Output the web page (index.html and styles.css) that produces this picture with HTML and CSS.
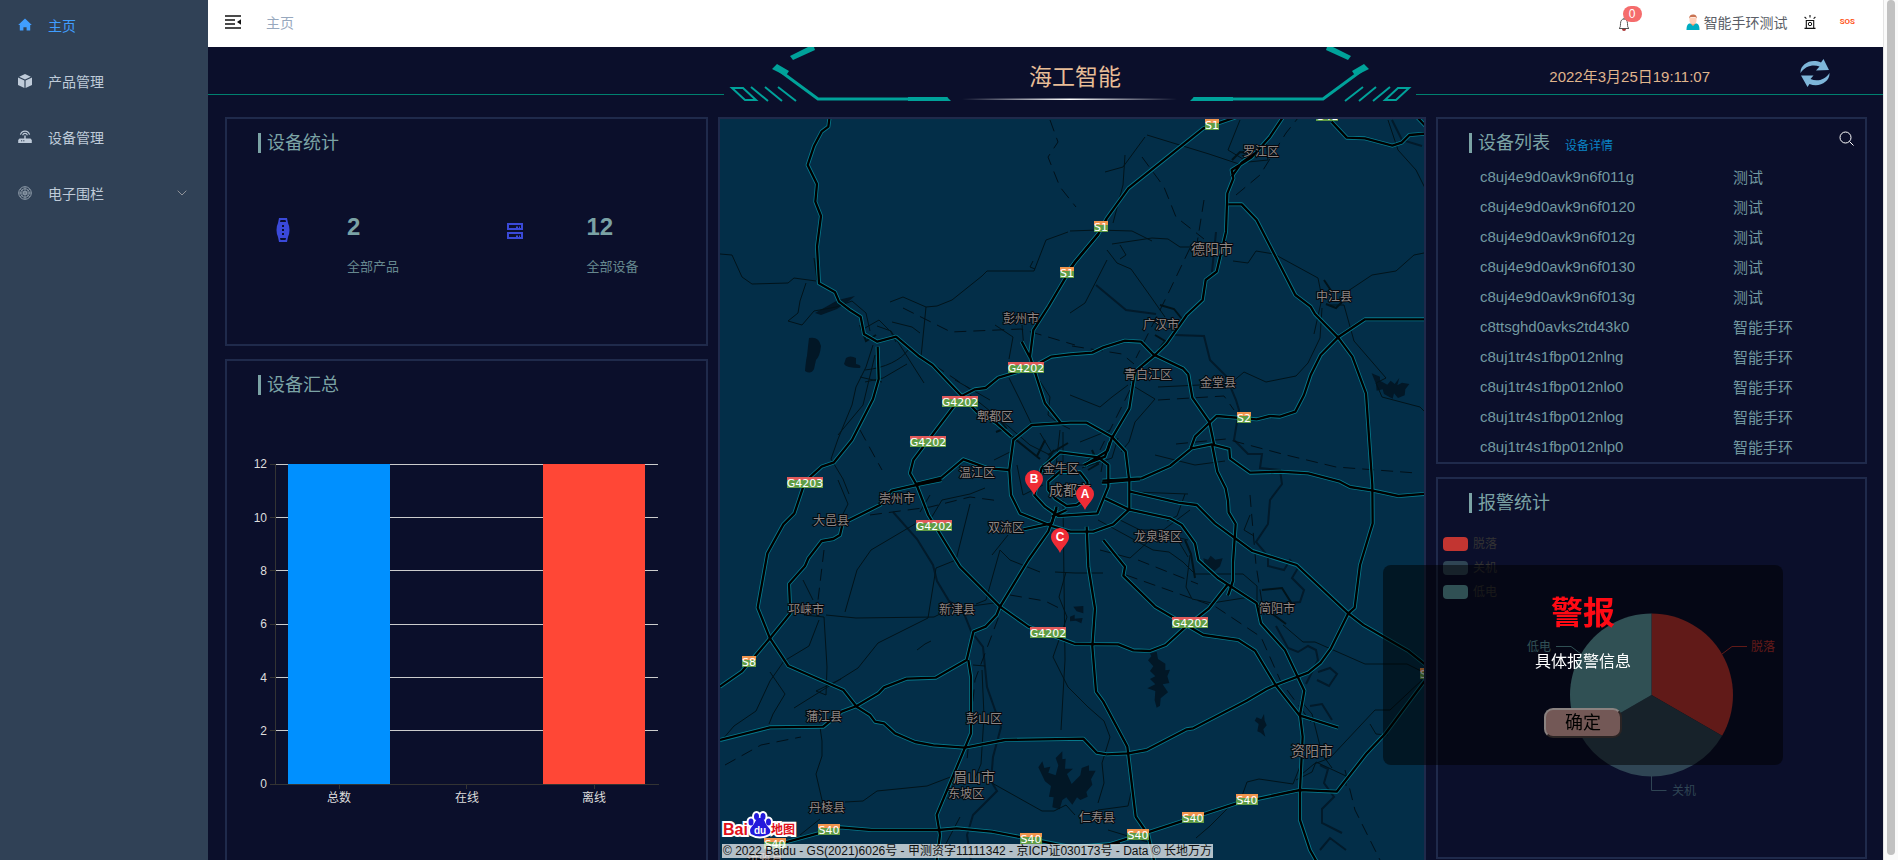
FILE: index.html
```html
<!DOCTYPE html>
<html lang="zh-CN">
<head>
<meta charset="utf-8">
<title>海工智能</title>
<link rel="stylesheet" href="styles.css">
</head>
<body>
<div class="app">
  <nav class="sidebar" aria-label="主菜单">
    <a class="menu-item menu-item--active" href="#">
      <svg class="menu-icon" viewBox="0 0 14 14"><path d="M7 .6 13.8 7h-1.6v5.6H8.6V9.2H5.4v3.4H1.8V7H.2z" fill="currentColor"/></svg>
      <span>主页</span>
    </a>
    <a class="menu-item" href="#">
      <svg class="menu-icon" viewBox="0 0 14 14"><path d="M7 0l5.8 2.7L7 5.4 1.2 2.7zM0 3.6l6.4 3V14L0 11zM14 3.6l-6.4 3V14L14 11z" fill="currentColor"/></svg>
      <span>产品管理</span>
    </a>
    <a class="menu-item" href="#">
      <svg class="menu-icon" viewBox="0 0 14 14"><path d="M1.5 8.4h4.8V5.6h1.4v2.8h4.8L13.8 10v3H.2v-3z" fill="currentColor"/><path d="M3 10.8h1.2M5.2 10.8h1.2" stroke="#304156"/><path d="M2.4 4.6C4 0 10 0 11.600 4.600M4.600 5.200C5.400 2.700 8.600 2.700 9.400 5.200" fill="none" stroke="currentColor" stroke-width="1.200"/></svg>
      <span>设备管理</span>
    </a>
    <a class="menu-item" href="#">
      <svg class="menu-icon menu-icon--dim" viewBox="0 0 14 14" fill="none" stroke="currentColor"><circle cx="7" cy="7" r="6.300"/><circle cx="7" cy="7" r="4.200"/><circle cx="7" cy="7" r="1.800"/><path d="M2 3l10 8M2 11l10-8M7 .7v4.500M7 8.800v4.500M.7 7h4.500M8.800 7h4.500" stroke-width=".7"/></svg>
      <span>电子围栏</span>
      <svg class="menu-arrow" viewBox="0 0 10 6"><path d="M.7.7 5 5 9.300.7" fill="none" stroke="currentColor"/></svg>
    </a>
  </nav>

  <div class="main">
    <header class="topbar">
      <button class="icon-button" type="button" aria-label="折叠菜单">
        <svg width="16" height="14" viewBox="0 0 16 14"><path d="M0 1h16M0 5h10M0 9h10M0 13h16" stroke="#111" stroke-width="1.600"/><path d="M16 4.200v5.600L12 7z" fill="#111"/></svg>
      </button>
      <span class="breadcrumb">主页</span>
      <div class="topbar-tools">
        <button class="icon-button bell" type="button" aria-label="消息">
          <svg width="12" height="14" viewBox="0 0 12 14"><path d="M1 11.500c1.400-1 1.400-2 1.500-5C2.600 3.500 4 2 6 2s3.400 1.500 3.500 4.500c.1 3 .1 4 1.500 5zM6 2V.8" fill="none" stroke="#555"/><path d="M4 12h4a2 2 0 0 1-4 0z" fill="#a33"/></svg>
          <span class="badge">0</span>
        </button>
        <span class="user">
          <svg width="14" height="16" viewBox="0 0 14 16"><path d="M.5 16c0-4 1-6.500 3.500-6.500h6c2.500 0 3.500 2.500 3.500 6.500z" fill="#00acc1"/><path d="M5 7h4v3l-2 2-2-2z" fill="#ff9b6b"/><path d="M3.500 3.500h7v3a3.500 3.500 0 0 1-7 0z" fill="#ffcfb8"/><path d="M3.300 4.500C3 1.500 4.500.4 7 .4s4 1 3.700 4.100L9.500 3h-5z" fill="#c97352"/></svg>
          <span>智能手环测试</span>
        </span>
        <button class="icon-button siren" type="button" aria-label="报警">
          <svg width="12" height="14" viewBox="0 0 12 14" fill="none" stroke="#111"><path d="M.5 13.400h11M2.300 13V5.500h7.400V13M6 0v2.500M.6 2l1.800 1.600M11.400 2 9.600 3.600" stroke-width="1.100"/><circle cx="6" cy="9" r="1.700"/></svg>
        </button>
        <button class="icon-button sos" type="button">SOS</button>
      </div>
    </header>

    <div class="dashboard">
      <div class="banner">
        <div class="banner-line"></div>
        <div class="banner-title">
          <svg class="banner-art" viewBox="724 47 692 56">
            <defs>
              <g id="wing">
                <path d="M808 47h6l1 3-22 10-3-4zM777 64l12 7-2 3-3 1-12-6z" fill="#00a29a"/>
                <path d="M780 71l38 28h130" fill="none" stroke="#00a29a" stroke-width="3"/>
                <path d="M908 97h39l4 4h-43z" fill="#00a29a"/>
                <path d="M732 88h11l13 12h-11zM751 87l17 14M765 87l17 14M778 87l18 14" fill="none" stroke="#00a29a" stroke-width="2"/>
              </g>
              <linearGradient id="shine"><stop offset="0" stop-color="#fff" stop-opacity="0"/><stop offset=".5" stop-color="#fff"/><stop offset="1" stop-color="#fff" stop-opacity="0"/></linearGradient>
            </defs>
            <use href="#wing"/>
            <use href="#wing" transform="translate(2141 0) scale(-1 1)"/>
            <path d="M962 98.500h215v1.500H962z" fill="url(#shine)"/>
          </svg>
          <h1>海工智能</h1>
        </div>
        <div class="banner-line banner-side">
          <time>2022年3月25日19:11:07</time>
          <button class="icon-button refresh" type="button" aria-label="刷新">
            <svg width="30" height="28" viewBox="0 0 30 28" fill="#7eb6d9"><path d="M.5 14C0 5 11-1 21 3.500L23.500 0l5.500 11-13 .5 3.500-4C13 5 5 7 .5 14z"/><path d="M29.500 14C30 23 19 29 9.500 25L7.500 28 1 16.500l12.500 0L10.500 20C17 23 25 21 29.500 14z"/></svg>
          </button>
        </div>
      </div>

      <div class="columns">
        <div class="column">
          <section class="panel panel-stats">
            <h2 class="panel-title">设备统计</h2>
            <div class="stats">
              <div class="stat">
                <svg class="stat-icon stat-icon--watch" viewBox="0 0 24 24"><path d="M8 0h8l1 5c2 4 2 10 0 14l-1 5H8l-1-5c-2-4-2-10 0-14z" fill="#3a49d9"/><path d="M9 4l.5-2h5l.5 2zM9 20l.5 2h5l.5-2zM11 7h2v2h-2zM11 11h2v2h-2zM11 15h2v2h-2z" fill="#0b0f2b"/></svg>
                <div><div class="stat-value">2</div><div class="stat-label">全部产品</div></div>
              </div>
              <div class="stat">
                <svg class="stat-icon stat-icon--server" viewBox="0 0 24 24"><path d="M4 5h16v7H4zM4 14h16v7H4z" fill="#3a49d9"/><path d="M6 7h12v3h-1V8.500h-1V10h-1V8.500h-2V10H6zM6 16h12v3h-1v-1.500h-1V19h-1v-1.500h-2V19H6z" fill="#0b0f2b"/></svg>
                <div><div class="stat-value">12</div><div class="stat-label">全部设备</div></div>
              </div>
            </div>
          </section>
          <section class="panel panel-summary">
            <h2 class="panel-title">设备汇总</h2>
            <svg class="chart" viewBox="227 396 479 440" role="img" aria-label="设备汇总">
              <path d="M276 465.500h382M276 518.500h382M276 571.500h382M276 625.500h382M276 678.500h382M276 731.500h382" stroke="#ccc"/>
              <path d="M288 465h102v320H288z" fill="#0090ff"/>
              <path d="M543 465h102v320H543z" fill="#ff4736"/>
              <path d="M275.500 465v321M270 785.500h389M270 465.500h5M270 518.500h5M270 571.500h5M270 625.500h5M270 678.500h5M270 731.500h5M339.500 786v4M466.500 786v4M594.500 786v4" stroke="#333" fill="none"/>
              <g class="axis-text axis-text--y"><text x="267" y="469">12</text><text x="267" y="523">10</text><text x="267" y="576">8</text><text x="267" y="629">6</text><text x="267" y="683">4</text><text x="267" y="736">2</text><text x="267" y="789">0</text></g>
              <g class="axis-text"><text x="339" y="803">总数</text><text x="467" y="803">在线</text><text x="594" y="803">离线</text></g>
            </svg>
          </section>
        </div>

        <section class="panel map" aria-label="地图">
          <svg class="map-canvas" viewBox="720 119 704 760" preserveAspectRatio="xMidYMin slice">
            <defs>
              <g id="highways">
                <g transform="translate(715 110) scale(.33333)">
                  <path d="M344 20l-4 30-20 15-23 43-19 57 28 57-5 53 17 43-12 92 6 110 48 27 12 28 33 25 32 20 10 52 40 23 56-15 67 57 42 28 88 93 45 47 60 35 45 40"/>
                  <path d="M488 710L491 807 474 867 411 990 357 1057 320 1070 270 1115 238 1210 205 1243 157 1330 128 1493 165 1585 220 1668 385 1740 425 1790 465 1815 480 1835 507 1840 540 1870 600 1896 655 1906 750 1913 870 1890 1105 1886 1145 1928 1175 1933"/>
                  <path d="M1150 372l-70 83-80 135-45 70-10 80 45 140 48 60M920 695l25 47"/>
                  <path d="M1065 733L1008 740 945 775 850 803 812 834 780 838 740 858 595 1050 585 1090 605 1125 640 1215 735 1370 855 1490 940 1550 1080 1602 1210 1603 1255 1621 1305 1623 1352 1605 1410 1552 1482 1495 1537 1425"/>
                  <path d="M1065 938l-115 7-55 45-12 90 5 75 27 55 95 38 55 17"/>
                  <path d="M603 1122l77-19 65-55 75 27 63 5M680 1110l-75 15-75 17-35 43-95 47M382 1245l-7 30-20 12-35 6-40 52-10 23-48 54 4 88-61 75-85 100-65 45"/>
                  <path d="M15 1890l150-38 160-2 55-45 45-17 65-38 17-18 68-26 87-3 93-53 20-85 37-15 33-35 10-25 85-140 60-85 25-70"/>
                  <path d="M760 1650l8 50v170l-18 43-85 202 10 60-10 75"/>
                  <path d="M200 2200l110-30 65-18 95 8h200l55-5 105 10 90 17 150 30 145-12"/>
                </g>
                <g transform="translate(1070 110) scale(.33333)">
                  <path d="M0 475l85-103 25-47 65-90L400 55l100-34"/>
                  <path d="M0 733l67-5 33-16 65-20 48 3 37 38 90 43 15 17 12 70 51 73 14 67-5 5 15 77 25 50 7 37 2 35 21 35-8 115v55l-15 45"/>
                  <path d="M0 938h50l75 42 42 45 11 90v83l-48 45-60 22H0"/>
                  <path d="M640 20l-40 60-55 62-60 38 5 25-18 45-4 115-28 120-33 25-9 60-48 45-60 85-35 35-60 50-17 110-53 90-12 37-68 43M485 200l30-42 50-35"/>
                  <path d="M475 283h40l45 47 116 225 46 35 13 22 69 70 43 58 41 110 19 275 1 115-38 125-16 128-19 17-52 105-31 43-37 30-98 37-27 12-60 35-160 83-20 3-120 62-55 10-65 3"/>
                  <path d="M1080 628H885l-81 54-52 53-30 60-20 60-26 50-46 15-30-2-40 10-120-10-65 62-13 35M97 1112l118-7 85-37 65-53 60-12 53 14 2 28 60 43 90-3 85 5 95 25 30 16 65 10 80 17 85-7"/>
                  <path d="M785 35l45 48 55 2 82 22 28-9 23-23 60-5M1040 20l40 42"/>
                </g>
                <g transform="translate(1070 480) scale(.33333)">
                  <path d="M50 140l5 120 20 125-8 115 11 135 22 30 72 135 25 210 38 55 20 90"/>
                  <path d="M180 35l145 33 55 7 55 55 112 83 133 42 155 145 45 35 135 78 65 52M105 55l70 33 125 27 35 20 40 55 10 50 60 55 115 75 13 60 72 80 58 122-13 73 8 65-8 160v90l30 90 20 35"/>
                  <path d="M100 180l65 80-5 27 95 93 105 62 40 23 105 15 50 32 62 103 73 92 115 36"/>
                  <path d="M80 1105l160-50 260-85 190-40 110 5 90-115 55-58 125-167"/>
                </g>
                <g transform="translate(980 440) scale(.33333)">
                  <path d="M163 165l22-80 55-48 115 15 30 23v65l-33 80-117 8-40-28zM205 150v-25l35-30 60 2 22 28 3 45-35 25-30 3-35-23zM310 75l65-25 15-45M365 128l115-10M230 200l-15 52M260 210l-45 20M130 268l85-18"/>
                </g>
              </g>
            </defs>
            <rect class="land" x="700" y="100" width="760" height="800"/>
            <g class="water">
              <path d="M809 338q10-2 12 8-1 10-5 14l-2 9q-3 6-9 2 1-12 2-15 1-10 2-18zM846 358q4-3 10 0v6q6 1 4 4-14 0-16-4zM838 300l17-4-6 5-12 8-16 6-6-2z" class="lake"/>
              <g transform="translate(1070 110) scale(.33333)" class="lake">
                <path d="M905 790l25 10 0 12 22 12 10-12 12 10 14-18-6 22 14-8 22 4-12 16-2 18-20 8-12-14-4 16-26-14-4-14-18 4-2-20z"/>
                <path d="M240 1630l20-5 4 22 22 14 0 20 14-2-8 20 6 20-20 4 16 24-22 18-2 22-10 6-6-22 2-28-24-8 24-12-16-16 16-8-16-16 10-14-16-18 10-12z"/>
                <path d="M560 1822l14 6 8-16 2 20 6 14-10 12 6 22-14-12-10-4 4-22-12-10z"/>
                <path d="M400 1345l14 4 8-12 14 12 22-4-8 24-16 14-12-8-10 6-8-16z"/>
                <path d="M10 1260l30-2 0 22-20-6zM0 1290l14-6 0 12 24-2-4 16-16-8-18 2z" transform="translate(0 230)"/>
              </g>
              <g transform="translate(715 480) scale(.33333)" class="lake">
                <path d="M970 862l12-18 6 20 18-4-6 18 22 8 8-30-8-22 20-20 0 24 10-2-2 30 24 0-18 16 14 30 26-26 4-22 22-8 0 16 20 0-14 26 4 16-18 22 4 14-22 10-10-8-14 22-18-22-12 8-8 28-22-6 4-30-14-2 6-32-18-14z"/>
              </g>
              <path d="M893 512l24 27 16 26 4 16 12 20 14 10 8 20 12 16 4 40 14 40-8 30-2 24 6 10-24 24-6 20 6 40M1096 285l30 25 30 4M1174 335l30 1 6 24 16 16 10 24 3 10-5 30 14 14 14 0-2 14 20 2 2 14-12 16-2 24-12 18 12 14 0 10 16 4 6-10 8 8-6 10 12 12-4 12-20 2M1276 626l12 22 10 4 10-6 8 4 2 10-12 24M1318 672l12-4 7 6-8 12-12-6M1310 706l12-2 10 16M1392 120l10 20 20 6M1320 765l8 4-4 14 10 14-12 12 0 14 20 10M1320 850l10-12 16 12M1216 232l-4 40" class="river"/>
            </g>
            <g class="minor">
              <path d="M720 254l12 1 10 22 10 7 36-1 6-5 22 3M806 283l-6 18-2 12-10 8 14 4 12-14 22-4 16-6 14 12 4 18M814 258l3 22M877 326l14 5 33 52M865 328l14-8 12 12 5 10M882 382l-22-5M873 345l-7 22-10 20-4 18-14 34-7 20 12 20 6 15M875 355l-12 50-25 30M907 364l-24 14-18 4M865 370c20-2 36-10 43-20M890 302l13-5 23 10 11-1 15-6 30-24 5-5h47l12-31 22-8M926 307l-5 50M892 322l20 5 8 6M1035 269l-5-2 3-6M1105 172l18-5 22-30M1147 135l62 19 30 10M1125 155l-2 30-10 38M1070 231l28-1 34 1 20 10M1112 244l40-6 16 1 12 8h20M1120 245l6 10-6 4M1107 250l10 13 14 6 20 28 14 20M1107 260l-22 43-15 10M1233 261l15 2 8-12 18 3 44 24 4 20-8 36M1342 295l30-20 24-4 18-16 10-2M1330 305l14 0 10 36 32 37-10 5 6 14 38 10 6 6M1322 308l-2 30-12 25-12 13-30 6-22-10-14 12h-10l-62 3M1240 120l-12 30 20 12 20-2-2-18"/>
              <path d="M995 325l18 12-4 22M1022 325l2 24 8 14M1036 375l14 22-2 18 10 8 12 6M1009 378l10 20 12 25M955 380l35 20M970 395l25 20 35 30 20 10M1070 395l30 12 12-10 16-12M1130 384l25 15-6 7-14 16-6 20-8 10M1110 430l-30 12M1118 438l-6 20-30 10M1094 453l-10 12-20 0M1105 450l-4 22M1060 430l-4 36M1063 432v30M1040 433l12 20M994 460l20-10M985 488l-15 6-28 6-12 20M930 495l-10 17M970 504l-14 56-20 8-8 50-50 25-20 25-64 40M838 480l10 24-5 10M915 524l-44 26-14 20-12 42M803 580l10 20M804 615l20 2 3 50-1 28-10-4 25-12M826 615l30 3 78-1 16-8 44-6M819 620l-10 26-25 15-14 20-14 30-22 15-12 14M770 672l15 22-12 20-4 10M820 727l2 14v15l-6 18 6 26 6 6M845 802l18-1 14-10 50-5 26-10M800 835l20-16M992 783l50 28 12 0 12-6 9 10M1055 572l20 1h28M1000 550l10 10 30 12M1000 550l-14 50-10 4M1008 535l-16 20M1017 465l6 30 20-10M1063 500l2 160-4 70M1066 572l-7 25 8 20-14 40 15 30 20 20 16 14 6 16-8 26 2 20-6 20M1098 810l30-4 4-18M1108 830l40 12M1100 550l30 8 20-18 40-30M1098 520l55 30 16 2 14 10 12 12h48l14 12v14l6 12M1190 555l-4 32 6 12 20 4 38-6M1188 540l-12-3 12 20M1120 520l20 10 20 0M1250 515l-6 15 10 6M1283 625l20 17 12 0 50 22h42l16 8M1422 680l-32 30h-15l-15 16-30 32-16 6-12 10M1370 724l6 10 12 1M1300 700l12 14 10 40 10 14M1296 780l16-8 4-10 30 14 0 10M1242 796l5-14 12-3 34 5M1293 784l8-20M1196 838l14-12 20-20M973 665l12 1M982 670l2 46-3 48-6 14M917 650l8-6 6-3M940 855l20-38M1155 455l40 10 30-4M1133 492l55 2M1185 494l-8 22-10 5M1388 120l10 30 18 20 10 20"/>
              <path class="tangle" d="M1045 440l-8 16M1054 450l-12 20-12 8M1048 455l20-12M1000 420l6 8-10 4M960 400l30 18 30 25 20 16M1092 450l6 14-10 6M860 325l6 16 10-6M1232 160l8-8 18 2M1262 590l20-2 10 16M1270 612l16 12M1324 280l8 12M1326 304l10 4 6-6M1160 305l14 4 8 10M1155 335l10 6-6 8M1185 540l6 14 4 24"/>
            </g>
            <g class="rail">
              <path d="M1050 120l8 22-10 15 12 30 16 20M1142 157l22 30 12 30 28 22M1236 195l24-20 26-42 16-20M903 308l48 24 70-3 54 16M934 365l36 24M1072 346l50 8 12 10M1190 248l-24 50-30 60M1204 200l-8 50M1158 400l66-4 10 14M1176 444l50-5 60 16 50 12 80 6M860 430l22 40M1126 575l90 32 45 30 20 45 30 40M824 550l-6 50M725 765l36-20 40-8M1010 595l35 6 20 10M1005 600l-30 80-8 80M1345 770l10 40 30 60M1250 495l6 70 8 50M1138 560l60 24M870 515l60-8 40-10 30 4M1130 390l-30 60"/>
            </g>
            <use href="#highways" class="road-edge"/>
            <use href="#highways" class="road-core"/>
            <g class="place">
              <text x="1261" y="156">罗江区</text><text x="1334" y="301">中江县</text><text x="1161" y="329">广汉市</text><text x="1148" y="379">青白江区</text><text x="1218" y="387">金堂县</text><text x="1021" y="323">彭州市</text><text x="995" y="421">郫都区</text><text x="977" y="477">温江区</text><text x="1061" y="473">金牛区</text><text x="897" y="503">崇州市</text><text x="831" y="525">大邑县</text><text x="1006" y="532">双流区</text><text x="806" y="614">邛崃市</text><text x="957" y="614">新津县</text><text x="824" y="721">蒲江县</text><text x="984" y="723">彭山区</text><text x="966" y="798">东坡区</text><text x="827" y="812">丹棱县</text><text x="1158" y="541">龙泉驿区</text><text x="1277" y="613">简阳市</text><text x="1097" y="822">仁寿县</text><text x="765" y="864">洪雅县</text>
              <g class="place-city"><text x="1212" y="254">德阳市</text><text x="974" y="782">眉山市</text><text x="1312" y="756">资阳市</text><text x="1070" y="495">成都市</text></g>
            </g>
            <g class="shield">
              <path class="shield-body" d="M1008 362h36v11h-36zM942 396h36v11h-36zM910 436h36v11h-36zM787 477h36v11h-36zM916 520h36v11h-36zM1030 627h36v11h-36zM1172 617h36v11h-36zM1060 267h14v11h-14zM1094 221h14v11h-14zM1205 119h14v11h-14zM1316 111h22v10h-22zM1237 412h14v11h-14zM742 656h14v11h-14zM818 824h22v11h-22zM764 838h22v11h-22zM1020 833h22v11h-22zM1127 829h22v11h-22zM1182 812h22v11h-22zM1236 794h22v11h-22zM1420 668h14v11h-14z"/>
              <path class="shield-national" d="M1008 362h36v3h-36zM942 396h36v3h-36zM910 436h36v3h-36zM787 477h36v3h-36zM916 520h36v3h-36zM1030 627h36v3h-36zM1172 617h36v3h-36z"/>
              <path class="shield-province" d="M1060 267h14v4h-14zM1094 221h14v4h-14zM1205 119h14v4h-14zM1237 412h14v4h-14zM742 656h14v4h-14zM818 824h22v4h-22zM764 838h22v4h-22zM1020 833h22v4h-22zM1127 829h22v4h-22zM1182 812h22v4h-22zM1236 794h22v4h-22zM1420 668h14v4h-14z"/>
              <text x="1026" y="372">G4202</text><text x="960" y="406">G4202</text><text x="928" y="446">G4202</text><text x="805" y="487">G4203</text><text x="934" y="530">G4202</text><text x="1048" y="637">G4202</text><text x="1190" y="627">G4202</text><text x="1067" y="277">S1</text><text x="1101" y="231">S1</text><text x="1212" y="129">S1</text><text x="1327" y="120">G41</text><text x="1244" y="422">S2</text><text x="749" y="666">S8</text><text x="829" y="834">S40</text><text x="775" y="848">S40</text><text x="1031" y="843">S40</text><text x="1138" y="839">S40</text><text x="1193" y="822">S40</text><text x="1247" y="804">S40</text><text x="1427" y="678">S4</text>
            </g>
            <g class="pin">
              <path d="M1034 495c-3-7-9-10-9-16a9 9 0 0 1 18 0c0 6-6 9-9 16zM1085 510c-3-7-9-10-9-16a9 9 0 0 1 18 0c0 6-6 9-9 16zM1060 553c-3-7-9-10-9-16a9 9 0 0 1 18 0c0 6-6 9-9 16z"/>
              <text x="1034" y="483">B</text><text x="1085" y="498">A</text><text x="1060" y="541">C</text>
            </g>
            <g class="baidu">
              <path d="M751 834c-3-6 2-7 4-12s8-6 10 0 8 7 4 12q-9 5-18 0z" class="baidu-paw baidu-halo"/>
              <g class="baidu-paw baidu-halo"><ellipse cx="751" cy="822" rx="2.500" ry="3.500"/><ellipse cx="756.500" cy="816.500" rx="2.500" ry="3.500"/><ellipse cx="763" cy="816.500" rx="2.500" ry="3.500"/><ellipse cx="768.500" cy="822" rx="2.500" ry="3.500"/></g>
              <text x="723" y="835" class="baidu-name">Bai</text>
              <text x="771" y="834" class="baidu-map">地图</text>
              <path d="M751 834c-3-6 2-7 4-12s8-6 10 0 8 7 4 12q-9 5-18 0z" class="baidu-paw"/>
              <g class="baidu-paw"><ellipse cx="751" cy="822" rx="2.500" ry="3.500"/><ellipse cx="756.500" cy="816.500" rx="2.500" ry="3.500"/><ellipse cx="763" cy="816.500" rx="2.500" ry="3.500"/><ellipse cx="768.500" cy="822" rx="2.500" ry="3.500"/></g>
              <text x="754" y="834" class="baidu-du">du</text>
            </g>
          </svg>
          <div class="map-credit">© 2022 Baidu - GS(2021)6026号 - 甲测资字11111342 - 京ICP证030173号 - Data © 长地万方</div>
        </section>

        <div class="column">
          <section class="panel panel-devices">
            <div class="panel-head">
              <h2 class="panel-title">设备列表</h2>
              <a class="detail-link" href="#">设备详情</a>
              <button class="icon-button search" type="button" aria-label="搜索">
                <svg width="15" height="15" viewBox="0 0 15 15" fill="none" stroke="#fff"><circle cx="6.500" cy="6.500" r="5.500"/><path d="M10.500 10.500l4 4"/></svg>
              </button>
            </div>
            <table class="devices">
              <tbody>
                <tr><td>c8uj4e9d0avk9n6f011g</td><td>测试</td></tr>
                <tr><td>c8uj4e9d0avk9n6f0120</td><td>测试</td></tr>
                <tr><td>c8uj4e9d0avk9n6f012g</td><td>测试</td></tr>
                <tr><td>c8uj4e9d0avk9n6f0130</td><td>测试</td></tr>
                <tr><td>c8uj4e9d0avk9n6f013g</td><td>测试</td></tr>
                <tr><td>c8ttsghd0avks2td43k0</td><td>智能手环</td></tr>
                <tr><td>c8uj1tr4s1fbp012nlng</td><td>智能手环</td></tr>
                <tr><td>c8uj1tr4s1fbp012nlo0</td><td>智能手环</td></tr>
                <tr><td>c8uj1tr4s1fbp012nlog</td><td>智能手环</td></tr>
                <tr><td>c8uj1tr4s1fbp012nlp0</td><td>智能手环</td></tr>
              </tbody>
            </table>
          </section>
          <section class="panel panel-alarms">
            <h2 class="panel-title">报警统计</h2>
            <svg class="chart" viewBox="1438 520 427 330" role="img" aria-label="报警统计">
              <g class="legend">
                <rect x="1443" y="538" width="25" height="14" rx="4" fill="#c23531"/><text x="1473" y="549">脱落</text>
                <rect x="1443" y="562" width="25" height="14" rx="4" fill="#2f4554"/><text x="1473" y="573">关机</text>
                <rect x="1443" y="586" width="25" height="14" rx="4" fill="#61a0a8"/><text x="1473" y="597">低电</text>
              </g>
              <path d="M1651.500 696v-81.500a81.500 81.500 0 0 1 70.600 122.200z" fill="#c23531"/>
              <path d="M1651.500 696l70.600 40.700a81.500 81.500 0 0 1-141.200 0z" fill="#2f4554"/>
              <path d="M1651.500 696l-70.600 40.700a81.500 81.500 0 0 1 70.600-122.200z" fill="#61a0a8"/>
              <g fill="none"><path d="M1722 655l10-7.500h15" stroke="#c23531"/><path d="M1651.500 777v14.500h15" stroke="#2f4554"/><path d="M1581 655l-10-7.500h-15" stroke="#61a0a8"/></g>
              <g class="pie-text"><text x="1751" y="652" fill="#c23531">脱落</text><text x="1672" y="796" fill="#2f4554">关机</text><text x="1527" y="652" fill="#61a0a8">低电</text></g>
            </svg>
          </section>
        </div>
      </div>
    </div>
  </div>

  <div class="scroll-track"><div class="scroll-thumb"></div></div>
</div>

<div class="alarm" role="alertdialog" aria-labelledby="alarm-title">
  <h2 class="alarm-title" id="alarm-title">警报</h2>
  <p class="alarm-text">具体报警信息</p>
  <button class="alarm-ok" type="button">确定</button>
</div>
</body>
</html>
```

FILE: styles.css
```css
* { box-sizing: border-box; }

body {
  margin: 0;
  overflow: hidden;
  font-family: "Liberation Sans", "Noto Sans CJK SC", sans-serif;
  font-size: 14px;
}

h1, h2, p { margin: 0; font-weight: 400; }
svg { display: block; flex: none; }

.app { display: flex; height: 100vh; background: #0b0f2b; }

.sidebar {
  flex: none;
  width: 208px;
  margin-top: -3px;
  background: #304156;
}

.menu-item {
  display: flex;
  align-items: center;
  height: 56px;
  padding: 0 21px 0 18px;
  color: #bfcbd9;
  text-decoration: none;
}
.menu-item span { margin-left: 16px; }
.menu-item--active { color: #409eff; }
.menu-icon { width: 14px; height: 14px; }
.menu-icon--dim { color: #909dab; }
.menu-arrow { width: 10px; height: 6px; margin-left: auto; color: #909399; }

.main { display: flex; flex: 1; flex-direction: column; min-width: 0; }

.icon-button { display: flex; padding: 0; border: 0; background: none; }

.topbar {
  display: flex;
  flex: none;
  align-items: center;
  height: 47px;
  padding: 0 28px 4px 17px;
  background: #fff;
}
.breadcrumb { margin-left: 25px; color: #97a8be; }
.topbar-tools { display: flex; align-items: center; margin-left: auto; }
.bell { position: relative; padding-top: 4px; }
.badge {
  position: absolute;
  left: 5px;
  top: -7px;
  min-width: 19px;
  height: 16px;
  border-radius: 8px;
  background: #f56c6c;
  color: #fff;
  font-size: 12px;
  line-height: 16px;
  text-align: center;
}
.user { display: flex; align-items: center; gap: 4px; margin-left: 56px; color: #5a5e66; }
.siren { margin-left: 16px; }
.sos {
  margin-left: 24px;
  color: #ff5722;
  font-family: Roboto, sans-serif;
  font-size: 8px;
  font-weight: 700;
}

.dashboard { display: flex; flex: 1; flex-direction: column; min-height: 0; overflow: hidden; }

.banner {
  display: grid;
  flex: none;
  grid-template-columns: minmax(0, 516fr) 692px minmax(0, 467fr);
  height: 70px;
}
.banner-line { height: 48px; border-bottom: 1px solid #00806f; }
.banner-title { position: relative; }
.banner-title h1 {
  padding-left: 10px;
  color: #e8bd97;
  font-size: 23px;
  line-height: 60px;
  text-align: center;
}
.banner-art { position: absolute; left: 0; top: 0; width: 100%; height: 56px; }
.banner-side { display: flex; align-items: center; justify-content: flex-end; padding-right: 53px; }
.banner-side time { padding-top: 10px; color: #e0b58c; font-size: 15px; }
.refresh { margin-left: 90px; padding-top: 4px; }

.columns {
  display: grid;
  flex: 1;
  grid-template-columns: minmax(0, 483fr) minmax(0, 708fr) minmax(0, 431fr);
  gap: 10px;
  min-height: 0;
  padding: 0 16px 0 17px;
}
.column { display: flex; flex-direction: column; gap: 13px; min-height: 0; }

.panel { flex: none; border: 2px solid #1f2a4b; overflow: hidden; }
.panel-title {
  margin: 14px 0 0 31px;
  padding-left: 6px;
  border-left: 3px solid #7ba3a5;
  color: #7ba3a5;
  font-size: 18px;
  line-height: 20px;
}
.chart { width: 100%; height: auto; }

.panel-stats { height: 229px; }
.stats { display: grid; grid-template-columns: 1fr 1fr; padding-top: 59px; }
.stat { display: flex; }
.stat-icon { width: 24px; height: 24px; margin-top: 6px; }
.stat-icon--watch { margin-left: 44px; margin-right: 52px; }
.stat-icon--server { margin-left: 36px; margin-right: 60px; }
.stat-value { color: #7ba3a5; font-size: 24px; font-weight: 700; line-height: 30px; }
.stat-label { margin-top: 14px; color: #66888f; font-size: 13px; line-height: 22px; }

.panel-summary { height: 520px; }
.axis-text { fill: #ddd; font-size: 12px; text-anchor: middle; }
.axis-text--y { text-anchor: end; }

.map { position: relative; height: 764px; background: #032e48; }
.map-canvas { width: 100%; height: 100%; }
.land { fill: #032e48; }
.lake { fill: #021726; }
.river { fill: none; stroke: #021a2a; stroke-width: 2; }
.minor { fill: none; stroke: #01131a; stroke-width: 1; }
.tangle { stroke-width: 2; }
.rail { fill: none; stroke: #011019; stroke-width: 1; stroke-dasharray: 12 7; }
.road-edge { fill: none; stroke: #06798c; stroke-width: 12; stroke-linejoin: round; }
.road-core { fill: none; stroke: #000; stroke-width: 7; stroke-linejoin: round; }
.place {
  fill: #8d8684;
  stroke: #05080d;
  stroke-width: 2;
  paint-order: stroke;
  font-size: 12px;
  text-anchor: middle;
}
.place-city { font-size: 14px; }
.shield { fill: #fff; font-family: "DejaVu Sans", sans-serif; font-size: 11px; text-anchor: middle; }
.shield-body { fill: #5f9c45; }
.shield-national { fill: #e05a5a; }
.shield-province { fill: #f0944d; }
.pin { fill: #f02c36; font-size: 12px; font-weight: 700; text-anchor: middle; }
.pin text { fill: #fff; }
.baidu { font-weight: 700; }
.baidu-paw { fill: #2319dc; }
.baidu-halo { stroke: #fff; stroke-width: 4; }
.baidu-name { fill: #e0101a; stroke: #fff; stroke-width: 4; paint-order: stroke; font-size: 16px; }
.baidu-map { fill: #e0101a; stroke: #fff; stroke-width: 4; paint-order: stroke; font-size: 12px; }
.baidu-du { fill: #fff; font-size: 10px; }
.map-credit {
  position: absolute;
  left: 2px;
  top: 725px;
  padding: 0 1px;
  background: rgba(255, 255, 255, .7);
  color: #111;
  font-size: 12px;
  line-height: 14px;
  white-space: nowrap;
}

.panel-devices { height: 347px; }
.panel-head { display: flex; align-items: center; }
.detail-link { margin: 16px 0 0 15px; color: #0a84c6; font-size: 12px; text-decoration: none; }
.search { margin: 5px 11px 0 auto; }
.devices { width: 100%; margin-top: 8px; border-collapse: collapse; table-layout: fixed; color: #7299a0; font-size: 15px; }
.devices td { height: 30px; padding: 0; }
.devices td:first-child { width: 295px; padding-left: 42px; }

.panel-alarms { height: 382px; }
.panel-alarms .chart { margin-top: 6px; }
.legend text { fill: #333; font-size: 12px; }
.pie-text { font-size: 12px; }

.scroll-track { flex: none; width: 15px; padding: 0 3px 5px; border-left: 1px solid #e4e4e4; background: #fafafa; }
.scroll-thumb { width: 8px; height: 100%; border-radius: 4px; background: #c1c1c1; }

.alarm {
  position: fixed;
  right: 115px;
  bottom: 95px;
  display: flex;
  flex-direction: column;
  align-items: center;
  width: 400px;
  height: 200px;
  padding-top: 26px;
  border-radius: 8px;
  background: rgba(0, 0, 0, .5);
}
.alarm-title { color: #ff0a14; font-size: 32px; font-weight: 700; line-height: 44px; }
.alarm-text { margin-top: 15px; color: #fff; font-size: 16px; line-height: 24px; }
.alarm-ok {
  width: 78px;
  height: 30px;
  margin-top: 34px;
  padding: 0;
  border: 2px solid;
  border-color: #8a8280 #2a2424 #2a2424 #8a8280;
  border-radius: 9px;
  background: #735856;
  color: #000;
  font-family: inherit;
  font-size: 18px;
  line-height: 24px;
}
```
